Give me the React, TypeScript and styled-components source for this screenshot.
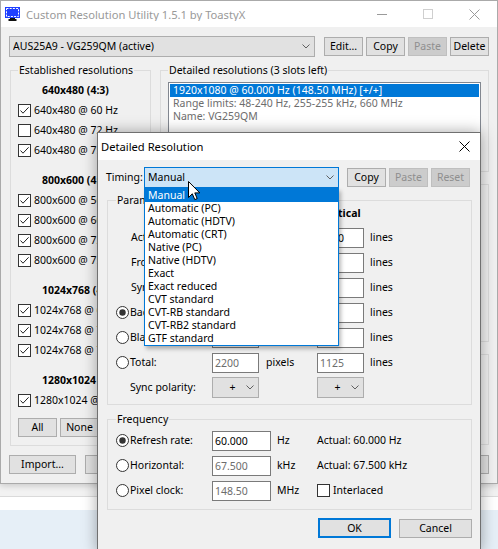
import React from 'react'
import styled, { createGlobalStyle } from 'styled-components'

const UI_FONT = `"Noto Sans", "Open Sans", "DejaVu Sans", sans-serif`

const GlobalStyle = createGlobalStyle`
  * { box-sizing: border-box; }
  html, body { margin: 0; padding: 0; }
  body {
    font-family: ${UI_FONT};
    font-size: 10.5px;
    line-height: 13px;
    color: #000;
    background: #e6eff7;
  }
  button, input { font: inherit; }
`

const Desktop = styled.div`
  position: relative;
  width: 498px;
  height: 549px;
  overflow: hidden;
  display: flex;
  flex-direction: column;
  background: #e6eff7;
`

const DesktopBand = styled.div<{ $h: number; $bg: string; $line?: boolean }>`
  flex: none;
  height: ${({ $h }) => $h}px;
  background: ${({ $bg }) => $bg};
  border-bottom: ${({ $line }) => ($line ? '1px solid #dadada' : 'none')};
`

/* ---------- window chrome ---------- */

const MainWindow = styled.div`
  position: relative;
  z-index: 1;
  flex: none;
  width: 498px;
  height: 484px;
  display: flex;
  flex-direction: column;
  background: #f0f0f0;
  border: 1px solid #aaaaaa;
  box-shadow: 0 2px 6px rgba(0, 0, 0, 0.16);
`

const TitleBar = styled.div<{ $h: number; $active?: boolean }>`
  flex: none;
  height: ${({ $h }) => $h}px;
  display: flex;
  align-items: center;
  background: #fff;
  color: ${({ $active }) => ($active ? '#000' : '#999')};
  font-size: 11.2px;
`

const TitleText = styled.div<{ $pad: number }>`
  flex: 1;
  padding-left: ${({ $pad }) => $pad}px;
  white-space: nowrap;
  overflow: hidden;
`

const AppIconBox = styled.span`
  flex: none;
  display: flex;
  margin-left: 4px;
`

const CaptionButton = styled.div<{ $w: number; $color: string }>`
  flex: none;
  width: ${({ $w }) => $w}px;
  height: 100%;
  display: flex;
  align-items: center;
  justify-content: center;
  color: ${({ $color }) => $color};
`

/* ---------- controls ---------- */

const Button = styled.button<{ $w: number; $off?: boolean; $focus?: boolean }>`
  flex: none;
  width: ${({ $w }) => $w}px;
  height: ${({ $focus }) => ($focus ? 20 : 19)}px;
  padding: 0;
  margin: 0;
  background: ${({ $off }) => ($off ? '#cccccc' : '#e1e1e1')};
  border: ${({ $off, $focus }) =>
    $focus ? '2px solid #0078d7' : $off ? '1px solid #bfbfbf' : '1px solid #adadad'};
  color: ${({ $off }) => ($off ? '#8f8f8f' : '#000')};
  line-height: 13px;
  white-space: nowrap;
`

const ComboBox = styled.div<{ $w: number; $focus?: boolean }>`
  flex: none;
  width: ${({ $w }) => $w}px;
  height: 21px;
  display: flex;
  align-items: center;
  padding: 0 4px 0 3px;
  background: ${({ $focus }) => ($focus ? '#cce4f7' : '#e1e1e1')};
  border: 1px solid ${({ $focus }) => ($focus ? '#0078d7' : '#adadad')};
  white-space: nowrap;
`

const ComboText = styled.span<{ $center?: boolean }>`
  flex: 1;
  text-align: ${({ $center }) => ($center ? 'center' : 'left')};
  padding-left: ${({ $center }) => ($center ? 3 : 0)}px;
  overflow: hidden;
`

const TextBox = styled.input<{ $w: number; $dim?: boolean }>`
  width: ${({ $w }) => $w}px;
  height: 20px;
  margin: 0;
  padding: 0 2px;
  background: #fff;
  border: 1px solid #7a7a7a;
  color: ${({ $dim }) => ($dim ? '#6d6d6d' : '#000')};
  outline: none;
  line-height: 13px;
`

const CheckBoxBox = styled.span`
  flex: none;
  width: 13px;
  height: 13px;
  display: flex;
  background: #fff;
  border: 1px solid #333;
`

const Chevron = () => (
  <svg width="8" height="5" viewBox="0 0 8 5">
    <path d="M0.5 0.5 L4 4 L7.5 0.5" fill="none" stroke="#606060" strokeWidth="1" />
  </svg>
)

const CheckBox = ({ checked }: { checked: boolean }) => (
  <CheckBoxBox>
    {checked && (
      <svg width="11" height="11" viewBox="0 0 11 11">
        <path d="M1.5 5.5 L4 8.2 L9.6 2.3" fill="none" stroke="#222" strokeWidth="1" />
      </svg>
    )}
  </CheckBoxBox>
)

const Radio = ({ checked }: { checked: boolean }) => (
  <svg width="13" height="13" viewBox="0 0 13 13" style={{ display: 'block' }}>
    <circle cx="6.5" cy="6.5" r="6" fill="#fff" stroke="#333" strokeWidth="1" />
    {checked && <circle cx="6.5" cy="6.5" r="3.2" fill="#333" />}
  </svg>
)

/* ---------- group boxes ---------- */

const GroupBox = styled.fieldset<{ $h?: number; $pad?: string; $mt?: number }>`
  margin: ${({ $mt }) => $mt ?? 0}px 0 0;
  min-width: 0;
  padding: ${({ $pad }) => $pad || '0 7px 8px'};
  border: 1px solid #dcdcdc;
  ${({ $h }) => ($h ? `height: ${$h}px; flex: none;` : '')}
`

const Legend = styled.legend`
  padding: 0 1px;
  margin: 0;
  line-height: 13px;
`

/* ---------- main window body ---------- */

const MainBody = styled.div`
  flex: 1;
  min-height: 0;
  display: flex;
  flex-direction: column;
  padding: 9px 8px;
`

const ButtonRow = styled.div<{ $mt?: number; $gap?: number; $end?: boolean }>`
  flex: none;
  display: flex;
  align-items: center;
  gap: ${({ $gap }) => $gap ?? 3}px;
  margin-top: ${({ $mt }) => $mt ?? 0}px;
  justify-content: ${({ $end }) => ($end ? 'flex-end' : 'flex-start')};
`

const TopRow = styled(ButtonRow)`
  height: 21px;
  & > ${ComboBox} {
    margin-right: 6px;
  }
`

const GroupsRow = styled.div`
  flex: 1;
  min-height: 0;
  display: grid;
  grid-template-columns: 141px 1fr;
  column-gap: 9px;
  margin: 7px 0 0 1px;
`

const RightColumn = styled.div`
  display: flex;
  flex-direction: column;
  min-width: 0;
  & > fieldset + fieldset {
    margin-top: 6px;
  }
`

const ResList = styled.div`
  display: flex;
  flex-direction: column;
  gap: 10px;
  margin-top: 3px;
`

const ResSection = styled.div`
  display: flex;
  flex-direction: column;
`

const ResHeader = styled.div`
  height: 20px;
  line-height: 20px;
  padding-left: 24px;
  font-weight: 700;
  white-space: nowrap;
`

const CheckRow = styled.div`
  height: 20px;
  display: flex;
  align-items: center;
  gap: 3px;
  white-space: nowrap;
`

const ListBox = styled.div<{ $h: number }>`
  margin-top: 5px;
  height: ${({ $h }) => $h}px;
  padding: 1px;
  background: #fff;
  border: 1px solid #828790;
  overflow: hidden;
`

const ListItem = styled.div<{ $sel?: boolean; $dim?: boolean }>`
  height: 13px;
  padding-left: 3px;
  white-space: nowrap;
  background: ${({ $sel }) => ($sel ? '#0078d7' : 'transparent')};
  color: ${({ $sel, $dim }) => ($sel ? '#fff' : $dim ? '#6d6d6d' : '#000')};
`

const BottomSpacer = styled.div`
  flex: 1;
`

/* ---------- dialog ---------- */

const Dialog = styled.div`
  position: absolute;
  left: 97px;
  top: 132px;
  z-index: 5;
  width: 384px;
  height: 420px;
  display: flex;
  flex-direction: column;
  background: #f0f0f0;
  border: 1px solid #707070;
  box-shadow: 0 0 14px rgba(0, 0, 0, 0.35);
`

const DialogBody = styled.div`
  flex: 1;
  display: flex;
  flex-direction: column;
  padding: 7px 8px 0 9px;
`

const FieldLabel = styled.span<{ $w: number }>`
  flex: none;
  width: ${({ $w }) => $w}px;
  margin-left: -1px;
  white-space: nowrap;
`

const ComboWrap = styled.div`
  position: relative;
  flex: none;
  margin-right: 5px;
`

const DropList = styled.div`
  position: absolute;
  left: 0;
  top: 100%;
  z-index: 3;
  width: 195px;
  background: #fff;
  border: 1px solid #0078d7;
  box-shadow: 2px 3px 4px rgba(0, 0, 0, 0.28);
`

const Cursor = styled.svg`
  position: absolute;
  left: 44px;
  top: 14px;
  z-index: 4;
`

const ParamGrid = styled.div<{ $cols: string; $rows: string; $pt?: number }>`
  display: grid;
  grid-template-columns: ${({ $cols }) => $cols};
  grid-template-rows: ${({ $rows }) => $rows};
  align-items: center;
  padding-top: ${({ $pt }) => $pt ?? 0}px;
`

const Cell = styled.div<{ $col: number; $pl?: number; $head?: boolean }>`
  grid-column: ${({ $col }) => $col};
  padding-left: ${({ $pl }) => $pl ?? 0}px;
  white-space: nowrap;
  display: flex;
  align-items: center;
  gap: 3px;
  ${({ $head }) => ($head ? 'align-self: start; justify-self: center; font-weight: 700;' : '')}
`

/* ---------- data ---------- */

const established = [
  {
    title: '640x480 (4:3)',
    rows: [
      ['640x480 @ 60 Hz', true],
      ['640x480 @ 72 Hz', false],
      ['640x480 @ 75 Hz', true],
    ],
  },
  {
    title: '800x600 (4:3)',
    rows: [
      ['800x600 @ 56 Hz', true],
      ['800x600 @ 60 Hz', true],
      ['800x600 @ 72 Hz', true],
      ['800x600 @ 75 Hz', true],
    ],
  },
  {
    title: '1024x768 (4:3)',
    rows: [
      ['1024x768 @ 60 Hz', true],
      ['1024x768 @ 70 Hz', true],
      ['1024x768 @ 75 Hz', true],
    ],
  },
  { title: '1280x1024 (5:4)', rows: [['1280x1024 @ 75 Hz', true]] },
] as { title: string; rows: [string, boolean][] }[]

const timings = [
  'Manual',
  'Automatic (PC)',
  'Automatic (HDTV)',
  'Automatic (CRT)',
  'Native (PC)',
  'Native (HDTV)',
  'Exact',
  'Exact reduced',
  'CVT standard',
  'CVT-RB standard',
  'CVT-RB2 standard',
  'GTF standard',
]

const params = [
  { label: 'Active:', radio: null, h: '1920', v: '1080', dim: false },
  { label: 'Front porch:', radio: null, h: '88', v: '4', dim: false },
  { label: 'Sync width:', radio: null, h: '44', v: '5', dim: false },
  { label: 'Back porch:', radio: true, h: '148', v: '36', dim: false },
  { label: 'Blanking:', radio: false, h: '280', v: '45', dim: true },
  { label: 'Total:', radio: false, h: '2200', v: '1125', dim: true },
]

const frequency = [
  { label: 'Refresh rate:', on: true, value: '60.000', unit: 'Hz', actual: 'Actual: 60.000 Hz' },
  { label: 'Horizontal:', on: false, value: '67.500', unit: 'kHz', actual: 'Actual: 67.500 kHz' },
  { label: 'Pixel clock:', on: false, value: '148.50', unit: 'MHz', actual: null },
]

/* ---------- icons ---------- */

const AppIcon = () => (
  <svg width="16" height="16" viewBox="0 0 16 16">
    <rect x="0" y="1" width="15" height="11" fill="#1f3fff" />
    <rect
      x="1.5"
      y="2.5"
      width="12"
      height="8"
      fill="none"
      stroke="#fff"
      strokeWidth="1"
      strokeDasharray="2 1.2"
    />
    <rect x="5" y="12" width="5" height="1" fill="#111" />
    <rect x="3.5" y="13" width="8" height="2" fill="#111" />
  </svg>
)

const MinGlyph = () => (
  <svg width="10" height="10" viewBox="0 0 10 10">
    <path d="M0 5.5 H10" stroke="currentColor" strokeWidth="1" />
  </svg>
)

const MaxGlyph = () => (
  <svg width="10" height="10" viewBox="0 0 10 10">
    <rect x="0.5" y="0.5" width="9" height="9" fill="none" stroke="currentColor" strokeWidth="1" />
  </svg>
)

const CloseGlyph = () => (
  <svg width="11" height="11" viewBox="0 0 11 11">
    <path d="M0.5 0.5 L10.5 10.5 M10.5 0.5 L0.5 10.5" stroke="currentColor" strokeWidth="1" />
  </svg>
)

/* ---------- app ---------- */

export default function App() {
  return (
    <>
      <GlobalStyle />
      <Desktop>
        <MainWindow>
          <TitleBar $h={26}>
            <AppIconBox>
              <AppIcon />
            </AppIconBox>
            <TitleText $pad={5}>Custom Resolution Utility 1.5.1 by ToastyX</TitleText>
            <CaptionButton $w={46} $color="#9a9a9a">
              <MinGlyph />
            </CaptionButton>
            <CaptionButton $w={46} $color="#cfcfcf">
              <MaxGlyph />
            </CaptionButton>
            <CaptionButton $w={46} $color="#9a9a9a">
              <CloseGlyph />
            </CaptionButton>
          </TitleBar>

          <MainBody>
            <TopRow>
              <ComboBox $w={306}>
                <ComboText>AUS25A9 - VG259QM (active)</ComboText>
                <Chevron />
              </ComboBox>
              <Button $w={39}>Edit...</Button>
              <Button $w={39}>Copy</Button>
              <Button $w={39} $off>
                Paste
              </Button>
              <Button $w={39}>Delete</Button>
            </TopRow>

            <GroupsRow>
              <GroupBox>
                <Legend>Established resolutions</Legend>
                <ResList>
                  {established.map((s) => (
                    <ResSection key={s.title}>
                      <ResHeader>{s.title}</ResHeader>
                      {s.rows.map(([label, checked]) => (
                        <CheckRow key={label}>
                          <CheckBox checked={checked} />
                          {label}
                        </CheckRow>
                      ))}
                    </ResSection>
                  ))}
                </ResList>
                <ButtonRow $mt={8}>
                  <Button $w={39}>All</Button>
                  <Button $w={39}>None</Button>
                  <Button $w={39}>Reset</Button>
                </ButtonRow>
              </GroupBox>

              <RightColumn>
                <GroupBox $h={108}>
                  <Legend>Detailed resolutions (3 slots left)</Legend>
                  <ListBox $h={60}>
                    <ListItem $sel>1920x1080 @ 60.000 Hz (148.50 MHz) [+/+]</ListItem>
                    <ListItem $dim>Range limits: 48-240 Hz, 255-255 kHz, 660 MHz</ListItem>
                    <ListItem $dim>Name: VG259QM</ListItem>
                  </ListBox>
                  <ButtonRow $mt={5}>
                    <Button $w={50}>Add...</Button>
                    <Button $w={50}>Edit...</Button>
                    <Button $w={50}>Delete</Button>
                    <Button $w={60}>Delete all</Button>
                    <Button $w={50}>Reset</Button>
                  </ButtonRow>
                </GroupBox>
                <GroupBox $h={164}>
                  <Legend>Standard resolutions</Legend>
                </GroupBox>
                <GroupBox $h={97}>
                  <Legend>Extension blocks</Legend>
                </GroupBox>
              </RightColumn>
            </GroupsRow>

            <ButtonRow $mt={10} $gap={9}>
              <Button $w={67}>Import...</Button>
              <Button $w={66}>Export...</Button>
              <BottomSpacer />
              <Button $w={75}>OK</Button>
              <Button $w={75}>Cancel</Button>
            </ButtonRow>
          </MainBody>
        </MainWindow>

        <DesktopBand $h={13} $bg="#f2f2f2" $line />
        <DesktopBand $h={13} $bg="#ffffff" />

        <Dialog>
          <TitleBar $h={27} $active>
            <TitleText $pad={3}>Detailed Resolution</TitleText>
            <CaptionButton $w={32} $color="#000">
              <CloseGlyph />
            </CaptionButton>
          </TitleBar>

          <DialogBody>
            <ButtonRow $gap={3}>
              <FieldLabel $w={35}>Timing:</FieldLabel>
              <ComboWrap>
                <ComboBox $w={195} $focus>
                  <ComboText>Manual</ComboText>
                  <Chevron />
                </ComboBox>
                <DropList>
                  {timings.map((t, i) => (
                    <ListItem key={t} $sel={i === 0}>
                      {t}
                    </ListItem>
                  ))}
                </DropList>
                <Cursor width="13" height="20" viewBox="0 0 13 20">
                  <path
                    d="M0.5 0.5 L0.5 16.5 L4.3 12.8 L6.8 18.6 L9.2 17.6 L6.8 11.9 L11.8 11.9 Z"
                    fill="#fff"
                    stroke="#000"
                    strokeWidth="1"
                    strokeLinejoin="miter"
                  />
                </Cursor>
              </ComboWrap>
              <Button $w={39}>Copy</Button>
              <Button $w={39} $off>
                Paste
              </Button>
              <Button $w={39} $off>
                Reset
              </Button>
            </ButtonRow>

            <GroupBox $pad="0 0 4px 8px" $mt={6}>
              <Legend>Parameters</Legend>
              <ParamGrid $cols="14px 82px 47px 58px 47px 1fr" $rows="18px repeat(7, 25px)">
                <Cell $col={3} $head>
                  Horizontal
                </Cell>
                <Cell $col={5} $head>
                  Vertical
                </Cell>
                {params.map((r) => (
                  <React.Fragment key={r.label}>
                    {r.radio !== null && (
                      <Cell $col={1}>
                        <Radio checked={r.radio} />
                      </Cell>
                    )}
                    <Cell $col={2} $pl={r.radio === null ? 1 : 0}>
                      {r.label}
                    </Cell>
                    <Cell $col={3}>
                      <TextBox $w={47} $dim={r.dim} value={r.h} readOnly />
                    </Cell>
                    <Cell $col={4} $pl={7}>
                      pixels
                    </Cell>
                    <Cell $col={5}>
                      <TextBox $w={47} $dim={r.dim} value={r.v} readOnly />
                    </Cell>
                    <Cell $col={6} $pl={6}>
                      lines
                    </Cell>
                  </React.Fragment>
                ))}
                <Cell $col={2}>Sync polarity:</Cell>
                <Cell $col={3}>
                  <ComboBox $w={47}>
                    <ComboText $center>+</ComboText>
                    <Chevron />
                  </ComboBox>
                </Cell>
                <Cell $col={5}>
                  <ComboBox $w={47}>
                    <ComboText $center>+</ComboText>
                    <Chevron />
                  </ComboBox>
                </Cell>
              </ParamGrid>
            </GroupBox>

            <GroupBox $pad="0 0 6px 8px" $mt={8}>
              <Legend>Frequency</Legend>
              <ParamGrid $cols="14px 82px 59px 46px 1fr" $rows="repeat(3, 25px)" $pt={2}>
                {frequency.map((f) => (
                  <React.Fragment key={f.label}>
                    <Cell $col={1}>
                      <Radio checked={f.on} />
                    </Cell>
                    <Cell $col={2}>{f.label}</Cell>
                    <Cell $col={3}>
                      <TextBox $w={59} $dim={!f.on} value={f.value} readOnly />
                    </Cell>
                    <Cell $col={4} $pl={6}>
                      {f.unit}
                    </Cell>
                    <Cell $col={5}>
                      {f.actual ?? (
                        <>
                          <CheckBox checked={false} />
                          Interlaced
                        </>
                      )}
                    </Cell>
                  </React.Fragment>
                ))}
              </ParamGrid>
            </GroupBox>

            <ButtonRow $mt={8} $gap={8} $end>
              <Button $w={73} $focus>
                OK
              </Button>
              <Button $w={73}>Cancel</Button>
            </ButtonRow>
          </DialogBody>
        </Dialog>
      </Desktop>
    </>
  )
}
